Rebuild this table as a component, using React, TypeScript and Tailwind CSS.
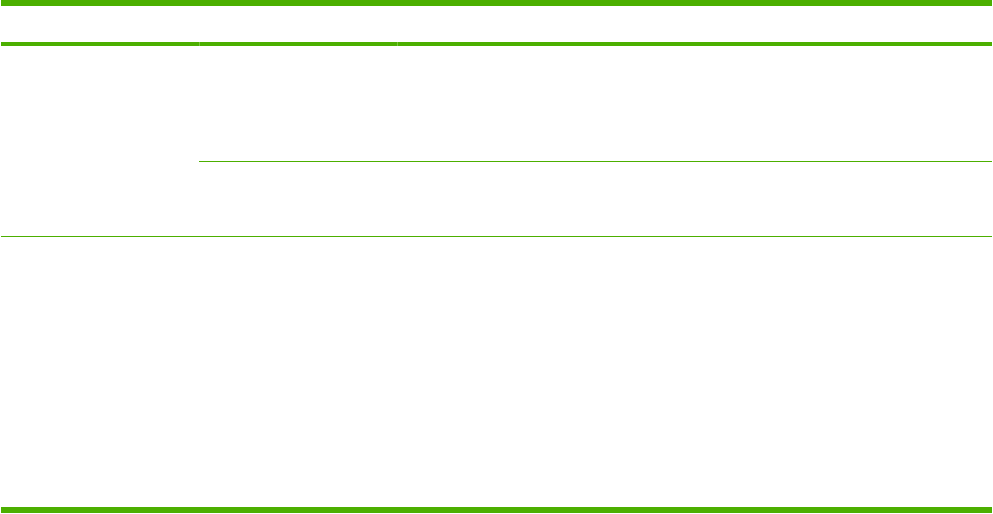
export default function App() {
  return (
    <div className="w-[993px] h-[514px] bg-white overflow-hidden">
      <div className="ml-px w-[991px] flex flex-col">
        <div className="h-[6px] bg-[#4caf00]" />
        <div className="h-[36px]" />
        <div className="flex h-[4px]">
          <div className="w-[198px] bg-[#4caf00]" />
          <div className="w-px bg-[#7cc640]" />
          <div className="w-[197px] bg-[#4caf00]" />
          <div className="w-px bg-[#7cc640]" />
          <div className="flex-1 bg-[#4caf00]" />
        </div>
        <div className="flex h-[191px] border-b border-[#4caf00]">
          <div className="w-[198px]" />
          <div className="flex-1 flex flex-col">
            <div className="h-[116px] border-b border-[#4caf00]" />
            <div className="flex-1" />
          </div>
        </div>
        <div className="h-[270px]" />
        <div className="h-[6px] bg-[#4caf00]" />
      </div>
    </div>
  );
}
